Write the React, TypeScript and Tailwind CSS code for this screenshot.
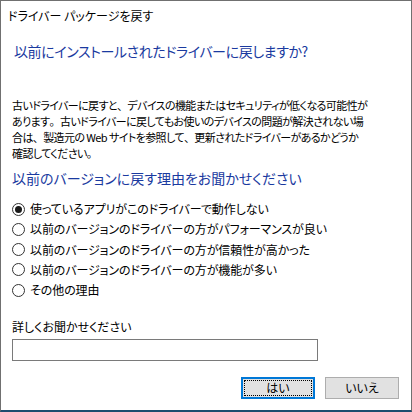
const reasons = [
  "使っているアプリがこのドライバーで動作しない",
  "以前のバージョンのドライバーの方がパフォーマンスが良い",
  "以前のバージョンのドライバーの方が信頼性が高かった",
  "以前のバージョンのドライバーの方が機能が多い",
  "その他の理由",
];

const body = [
  "古いドライバーに戻すと、デバイスの機能またはセキュリティが低くなる可能性が",
  "あります。古いドライバーに戻してもお使いのデバイスの問題が解決されない場",
  "合は、製造元の Web サイトを参照して、更新されたドライバーがあるかどうか",
  "確認してください。",
];

// keep 、 and 。 full width like the original dialog font
function Line({ text }: { text: string }) {
  const parts = text.split(/([、。])/);
  return (
    <div>
      {parts.map((p, i) =>
        p === "、" || p === "。" ? (
          <span key={i} className="[font-feature-settings:normal]">
            {p}
          </span>
        ) : (
          <span key={i}>{p}</span>
        ),
      )}
    </div>
  );
}

function Radio({ checked }: { checked: boolean }) {
  return (
    <span className="w-[13px] h-[13px] rounded-full border border-[#333333] bg-white flex items-center justify-center shrink-0">
      {checked && <span className="w-[7px] h-[7px] rounded-full bg-[#1a1a1a]" />}
    </span>
  );
}

export default function App() {
  return (
    <div className="w-[412px] h-[412px] bg-white border-t border-l border-r border-[#707070] border-b-2 border-b-[#1d4c6e] flex flex-col text-[12px] text-black font-['Noto_Sans_CJK_JP','Noto_Sans',sans-serif] [font-feature-settings:'palt']">
      <div className="h-[29px] flex items-center pl-[7px] text-[12px] whitespace-nowrap">
        ドライバー パッケージを戻す
      </div>

      <div className="pl-[11px] pr-[12px]">
        <h1 className="mt-[11px] pl-[2px] h-[20px] leading-[20px] text-[14px] tracking-[-0.4px] text-[#1a3aa0] whitespace-nowrap">
          以前にインストールされたドライバーに戻しますか?
        </h1>

        <div className="mt-[36px] leading-[16px] text-[11px] tracking-[-0.6px] whitespace-nowrap">
          {body.map((line) => (
            <Line key={line} text={line} />
          ))}
        </div>

        <h2 className="mt-[7px] h-[20px] leading-[20px] text-[14px] text-[#1a3aa0] whitespace-nowrap">
          以前のバージョンに戻す理由をお聞かせください
        </h2>

        <div className="mt-[11px] flex flex-col">
          {reasons.map((r, i) => (
            <div key={r} className="h-[20.25px] flex items-center gap-[5px] whitespace-nowrap">
              <Radio checked={i === 0} />
              <span className="leading-[16px] tracking-[-0.1px]">{r}</span>
            </div>
          ))}
        </div>

        <div className="mt-[19px] leading-[16px]">詳しくお聞かせください</div>
        <div className="mt-[4px] w-[306px] h-[22px] border border-[#7a7a7a] bg-white" />

        <div className="mt-[16px] flex justify-end gap-[10px]">
          <button className="w-[74px] h-[22px] border-2 border-[#0078d7] bg-[#e1e1e1] p-[1px]">
            <span className="w-full h-full flex items-center justify-center border border-dotted border-black leading-none">
              はい
            </span>
          </button>
          <button className="w-[74px] h-[22px] border border-[#adadad] bg-[#e1e1e1] flex items-center justify-center leading-none">
            いいえ
          </button>
        </div>
      </div>
    </div>
  );
}
